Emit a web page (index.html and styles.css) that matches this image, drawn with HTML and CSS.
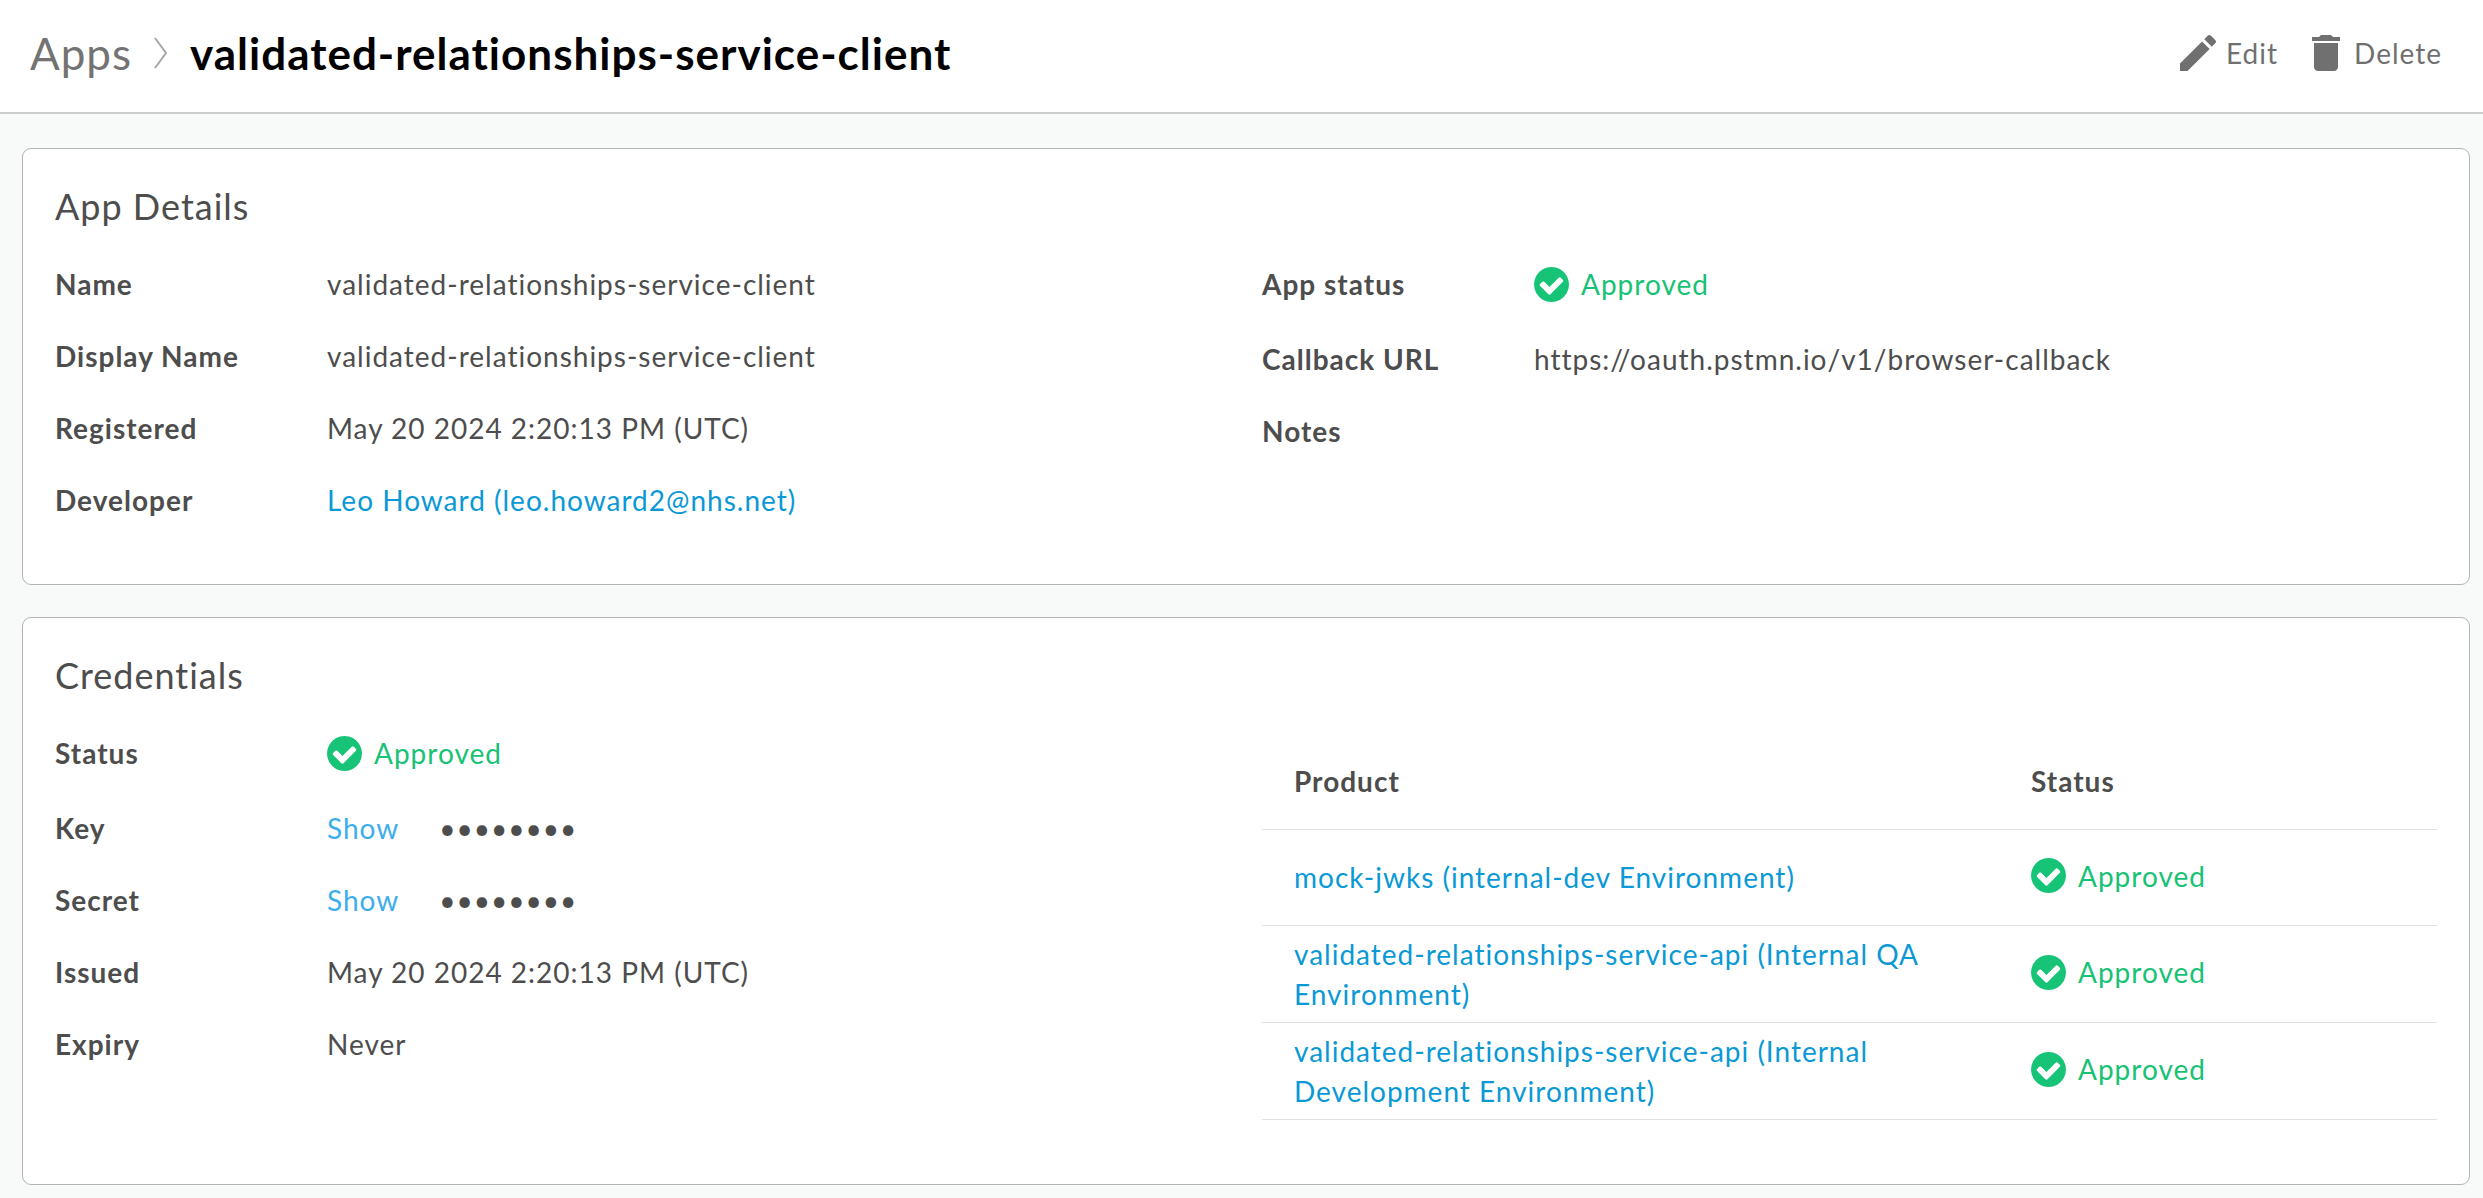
FILE: index.html
```html
<!DOCTYPE html>
<html lang="en">
<head>
<meta charset="utf-8">
<meta name="viewport" content="width=device-width, initial-scale=1">
<title>validated-relationships-service-client</title>
<link rel="stylesheet" href="styles.css">
</head>
<body>
<svg class="sprite" aria-hidden="true">
  <symbol id="check" viewBox="128 128 1536 1536"><path d="M1412 734q0-28-18-46l-91-90q-19-19-45-19t-45 19l-408 407-226-226q-19-19-45-19t-45 19l-91 90q-18 18-18 46 0 27 18 45l362 362q19 19 45 19 27 0 46-19l543-543q18-18 18-45zm252 162q0 209-103 385.5t-279.5 279.5-385.5 103-385.5-103-279.5-279.5-103-385.5 103-385.5 279.5-279.5 385.5-103 385.5 103 279.5 279.5 103 385.5z"/></symbol>
</svg>
<header class="topbar">
  <nav class="crumbs" aria-label="Breadcrumb">
    <a class="crumb-link" href="#apps">Apps</a>
    <svg class="crumb-sep" viewBox="0 0 14 32" aria-hidden="true"><path d="M1 1l11 15L1 31"/></svg>
    <h1 class="page-title">validated-relationships-service-client</h1>
  </nav>
  <div class="actions">
    <button class="action" type="button">
      <svg class="action-icon" viewBox="0 0 24 24" aria-hidden="true"><path d="M3 17.25V21h3.75L17.81 9.94l-3.75-3.75L3 17.25zM20.71 7.04c.39-.39.39-1.02 0-1.41l-2.34-2.34c-.39-.39-1.02-.39-1.41 0l-1.83 1.83 3.75 3.75 1.83-1.83z"/></svg>
      <span>Edit</span>
    </button>
    <button class="action" type="button">
      <svg class="action-icon" viewBox="0 0 24 24" aria-hidden="true"><path d="M6 19c0 1.1.9 2 2 2h8c1.1 0 2-.9 2-2V7H6v12zM19 4h-3.5l-1-1h-5l-1 1H5v2h14V4z"/></svg>
      <span>Delete</span>
    </button>
  </div>
</header>
<main class="content">
  <section class="card">
    <h2 class="card-title">App Details</h2>
    <div class="columns">
      <dl class="fields">
        <div class="field"><dt>Name</dt><dd>validated-relationships-service-client</dd></div>
        <div class="field"><dt>Display Name</dt><dd>validated-relationships-service-client</dd></div>
        <div class="field"><dt>Registered</dt><dd>May 20 2024 2:20:13 PM (UTC)</dd></div>
        <div class="field"><dt>Developer</dt><dd><a class="link" href="#developer">Leo Howard (leo.howard2@nhs.net)</a></dd></div>
      </dl>
      <dl class="fields">
        <div class="field"><dt>App status</dt><dd><span class="status"><svg class="status-icon" aria-hidden="true"><use href="#check"/></svg>Approved</span></dd></div>
        <div class="field"><dt>Callback URL</dt><dd>https://oauth.pstmn.io/v1/browser-callback</dd></div>
        <div class="field"><dt>Notes</dt><dd></dd></div>
      </dl>
    </div>
  </section>
  <section class="card">
    <h2 class="card-title">Credentials</h2>
    <div class="columns">
      <dl class="fields">
        <div class="field"><dt>Status</dt><dd><span class="status"><svg class="status-icon" aria-hidden="true"><use href="#check"/></svg>Approved</span></dd></div>
        <div class="field"><dt>Key</dt><dd class="secret"><button class="show" type="button">Show</button><span>••••••••</span></dd></div>
        <div class="field"><dt>Secret</dt><dd class="secret"><button class="show" type="button">Show</button><span>••••••••</span></dd></div>
        <div class="field"><dt>Issued</dt><dd>May 20 2024 2:20:13 PM (UTC)</dd></div>
        <div class="field"><dt>Expiry</dt><dd>Never</dd></div>
      </dl>
      <table class="products">
        <thead>
          <tr><th scope="col">Product</th><th class="status-col" scope="col">Status</th></tr>
        </thead>
        <tbody>
          <tr>
            <td><a class="link" href="#mock-jwks">mock-jwks (internal-dev Environment)</a></td>
            <td><span class="status"><svg class="status-icon" aria-hidden="true"><use href="#check"/></svg>Approved</span></td>
          </tr>
          <tr>
            <td><a class="link" href="#internal-qa">validated-relationships-service-api (Internal QA Environment)</a></td>
            <td><span class="status"><svg class="status-icon" aria-hidden="true"><use href="#check"/></svg>Approved</span></td>
          </tr>
          <tr>
            <td><a class="link" href="#internal-dev">validated-relationships-service-api (Internal Development Environment)</a></td>
            <td><span class="status"><svg class="status-icon" aria-hidden="true"><use href="#check"/></svg>Approved</span></td>
          </tr>
        </tbody>
      </table>
    </div>
  </section>
</main>
</body>
</html>
```
FILE: styles.css
```css
* {
  box-sizing: border-box;
}

body {
  margin: 0;
  background: #f8faf9;
  color: #4d4d4d;
  font-family: Lato, sans-serif;
  font-size: 28px;
  line-height: 40px;
  letter-spacing: 1px;
}

h1,
h2,
dl,
dd {
  margin: 0;
}

button {
  padding: 0;
  border: 0;
  background: none;
  color: inherit;
  font: inherit;
  letter-spacing: inherit;
  cursor: pointer;
}

a {
  text-decoration: none;
}

.sprite {
  display: none;
}

.topbar {
  display: flex;
  align-items: center;
  justify-content: space-between;
  padding: 21px 41px 27px 30px;
  border-bottom: 2px solid #cccecd;
  background: #fff;
}

.crumbs {
  display: flex;
  align-items: center;
  gap: 22px;
  font-size: 44px;
  line-height: 64px;
}

.crumb-link {
  color: #737373;
}

.crumb-sep {
  width: 14px;
  height: 32px;
  fill: none;
  stroke: #a6a6a6;
  stroke-width: 2;
}

.page-title {
  color: #000;
  font-size: 44px;
  font-weight: 700;
}

.actions {
  display: flex;
  gap: 24px;
  color: #707070;
}

.action {
  display: flex;
  align-items: center;
  gap: 4px;
}

.action-icon {
  width: 48px;
  height: 48px;
  fill: currentColor;
}

.content {
  display: flex;
  flex-direction: column;
  gap: 32px;
  padding: 34px 13px 13px 22px;
}

.card {
  padding: 31px 32px 40px;
  border: 1px solid #b3b5b4;
  border-radius: 9px;
  background: #fff;
}

.card-title {
  margin-bottom: 24px;
  font-size: 36px;
  font-weight: 400;
  line-height: 52px;
}

.columns {
  display: grid;
  grid-template-columns: 1fr 1fr;
  gap: 32px;
  align-items: start;
}

.field {
  display: flex;
  align-items: flex-start;
  padding: 8px 0 24px;
}

.field dt {
  flex: 0 0 272px;
  font-weight: 700;
}

.status {
  display: flex;
  align-items: center;
  gap: 12px;
  padding-bottom: 3px;
  color: #17c275;
}

.status-icon {
  width: 35px;
  height: 35px;
  fill: #17c477;
}

.link {
  color: #0a99d6;
}

.secret {
  display: flex;
  gap: 40px;
}

.show {
  color: #3caeec;
}

.products {
  margin: 8px 0 24px;
  width: 100%;
  border-collapse: collapse;
  table-layout: fixed;
}

.products th,
.products td {
  height: 96px;
  padding: 8px 32px;
  border-bottom: 1px solid #e0e0e0;
  text-align: left;
  vertical-align: middle;
}

.products .status-col {
  width: 438px;
}
```
